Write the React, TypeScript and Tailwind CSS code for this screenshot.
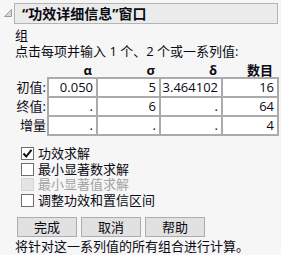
const font = { fontFamily: '"Open Sans", "Noto Sans CJK SC", sans-serif' }

const cols = ['w-[47px]', 'w-[61px]', 'w-[60px]', 'w-[54px]']

const rows = [
  { label: '初值:', values: ['0.050', '5', '3.464102', '16'] },
  { label: '终值:', values: ['.', '6', '.', '64'] },
  { label: '增量', values: ['.', '.', '.', '4'] },
]

const headers = ['α', 'σ', 'δ', '数目']

const options = [
  { label: '功效求解', checked: true, disabled: false },
  { label: '最小显著数求解', checked: false, disabled: false },
  { label: '最小显著值求解', checked: false, disabled: true },
  { label: '调整功效和置信区间', checked: false, disabled: false },
]

function Checkbox({ checked, disabled }: { checked: boolean; disabled: boolean }) {
  return (
    <div
      className={
        disabled
          ? 'w-[13px] h-[13px] shrink-0 border border-[#d4d4d4] bg-[#e4e4e4]'
          : 'w-[13px] h-[13px] shrink-0 border border-[#6e6e6e] bg-white flex items-center justify-center'
      }
    >
      {checked && (
        <svg width="11" height="11" viewBox="0 0 11 11">
          <path d="M1.5 5.5 L4.2 8.5 L9.5 1.8" fill="none" stroke="#111" strokeWidth="2" />
        </svg>
      )}
    </div>
  )
}

export default function App() {
  return (
    <div className="w-[281px] h-[255px] bg-[#f6f6f6] text-[13px] text-[#0a0a14] overflow-hidden" style={font}>
      {/* title */}
      <div className="flex items-start pt-[3px]">
        <svg width="14" height="21" viewBox="0 0 14 21" className="shrink-0">
          <path d="M4.5 13.5 L11.5 6.5 L11.5 13.5 Z" fill="#d9d9d9" stroke="#9a9a9a" strokeWidth="1" />
        </svg>
        <div className="w-[264px] h-[21px] border border-[#b4b4b4] bg-[#ebebeb] flex items-center pl-[7px] text-[14px] font-bold leading-none">
          “功效详细信息”窗口
        </div>
      </div>

      <div className="pl-[15px]">
        <div className="h-[14px] mt-[4px] leading-[14px]">组</div>
        <div className="h-[14px] mt-[2px] leading-[14px]">点击每项并输入 1 个、2 个或一系列值:</div>

        {/* header */}
        <div className="flex mt-[5px] h-[14px] leading-[14px] font-bold">
          <div className="w-[34px]" />
          {headers.map((h, i) => (
            <div key={h} className={`${cols[i]} mr-[2px] text-right pr-[4px]`}>
              {h}
            </div>
          ))}
        </div>

        {/* table */}
        <div className="flex">
          <div className="w-[32px] flex flex-col pt-[2px] gap-[2px]">
            {rows.map((r) => (
              <div key={r.label} className="h-[17px] leading-[17px] text-right pr-[1px]">
                {r.label}
              </div>
            ))}
          </div>
          <div className="bg-[#ababab] p-[2px] flex flex-col gap-[2px]">
            {rows.map((r) => (
              <div key={r.label} className="flex gap-[2px]">
                {r.values.map((v, i) => (
                  <div key={i} className={`${cols[i]} h-[17px] bg-white text-right pr-[3px] leading-[17px]`}>
                    {v}
                  </div>
                ))}
              </div>
            ))}
          </div>
        </div>

        {/* options */}
        <div className="mt-[10px] pl-[6px] flex flex-col">
          {options.map((o) => (
            <div key={o.label} className="h-[15.5px] flex items-center gap-[4px] leading-[15px]">
              <Checkbox checked={o.checked} disabled={o.disabled} />
              <span className={o.disabled ? 'text-[#a3a3a3]' : ''}>{o.label}</span>
            </div>
          ))}
        </div>

        {/* buttons */}
        <div className="flex gap-[4px] mt-[9px] pl-[2px]">
          {['完成', '取消', '帮助'].map((b) => (
            <div
              key={b}
              className="w-[60px] h-[20px] border border-[#adadad] bg-[#e1e1e1] flex items-center justify-center leading-none"
            >
              {b}
            </div>
          ))}
        </div>

        <div className="mt-[2px] h-[14px] leading-[14px]">将针对这一系列值的所有组合进行计算。</div>
      </div>
    </div>
  )
}
